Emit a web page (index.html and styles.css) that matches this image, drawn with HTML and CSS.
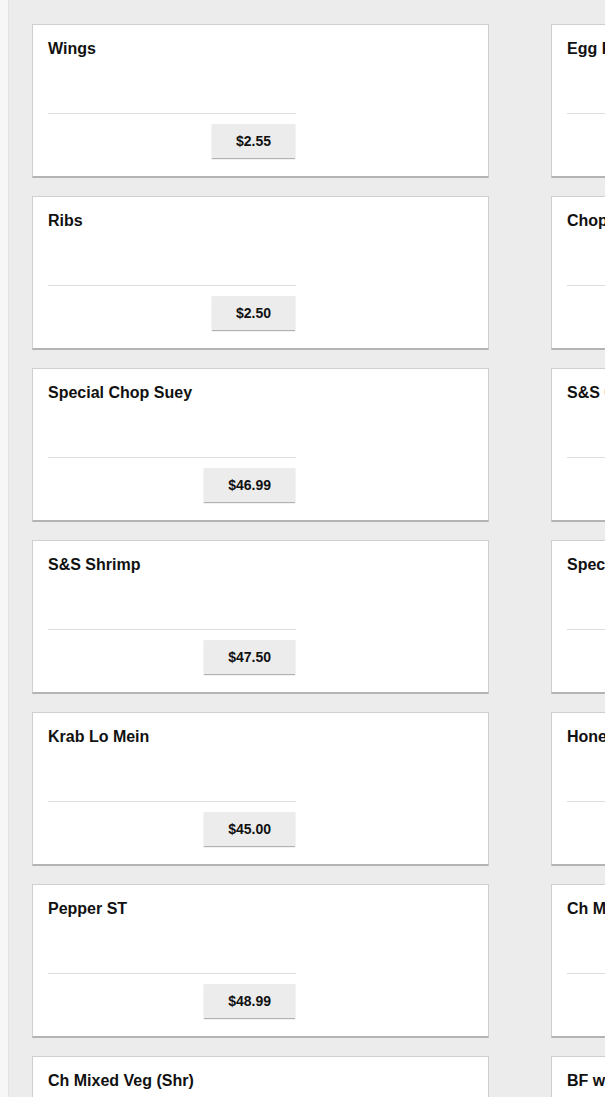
FILE: index.html
```html
<!DOCTYPE html>
<html>
<head>
<meta charset="utf-8">
<link rel="stylesheet" href="styles.css">
</head>
<body>
<div class="page">
  <div class="grid">
    <div class="card"><div class="title">Wings</div><div class="body"><div class="price"><span class="btn">$2.55</span></div></div></div>
    <div class="card"><div class="title">Egg Foo Young</div><div class="body"><div class="price"><span class="btn">$9.95</span></div></div></div>
    <div class="card"><div class="title">Ribs</div><div class="body"><div class="price"><span class="btn">$2.50</span></div></div></div>
    <div class="card"><div class="title">Chop Suey</div><div class="body"><div class="price"><span class="btn">$8.95</span></div></div></div>
    <div class="card"><div class="title">Special Chop Suey</div><div class="body"><div class="price"><span class="btn">$46.99</span></div></div></div>
    <div class="card"><div class="title">S&amp;S Chicken</div><div class="body"><div class="price"><span class="btn">$45.50</span></div></div></div>
    <div class="card"><div class="title">S&amp;S Shrimp</div><div class="body"><div class="price"><span class="btn">$47.50</span></div></div></div>
    <div class="card"><div class="title">Special Lo Mein</div><div class="body"><div class="price"><span class="btn">$46.99</span></div></div></div>
    <div class="card"><div class="title">Krab Lo Mein</div><div class="body"><div class="price"><span class="btn">$45.00</span></div></div></div>
    <div class="card"><div class="title">Honey Chicken</div><div class="body"><div class="price"><span class="btn">$45.00</span></div></div></div>
    <div class="card"><div class="title">Pepper ST</div><div class="body"><div class="price"><span class="btn">$48.99</span></div></div></div>
    <div class="card"><div class="title">Ch Mixed Veg</div><div class="body"><div class="price"><span class="btn">$45.00</span></div></div></div>
    <div class="card"><div class="title">Ch Mixed Veg (Shr)</div><div class="body"><div class="price"><span class="btn">$47.00</span></div></div></div>
    <div class="card"><div class="title">BF w/ Broccoli</div><div class="body"><div class="price"><span class="btn">$47.00</span></div></div></div>
  </div>
</div>
</body>
</html>
```
FILE: styles.css
```css
html, body {
  margin: 0;
  padding: 0;
}
body {
  background: #f7f7f7;
  padding-left: 8px;
  overflow: hidden;
  font-family: "Liberation Sans", Arial, sans-serif;
  color: #111;
}
.page {
  background: #ececec;
  border-left: 1px solid #e3e3e3;
  padding: 24px 0 0 23px;
  min-height: 1097px;
  box-sizing: border-box;
}
.grid {
  display: grid;
  grid-template-columns: 457px 457px;
  column-gap: 62px;
  row-gap: 18px;
  width: 976px;
}
.card {
  background: #fff;
  border: 1px solid #cfcfcf;
  border-bottom: 2px solid #b4b4b4;
  padding: 15px 16px 18px 15px;
  box-sizing: border-box;
  height: 154px;
}
.title {
  font-size: 16px;
  font-weight: bold;
  line-height: 18px;
  height: 73px;
  white-space: nowrap;
}
.body {
  width: 248px;
  border-top: 1px solid #dedede;
}
.price {
  display: flex;
  justify-content: flex-end;
  padding-top: 10px;
  padding-right: 1px;
}
.btn {
  display: block;
  background: #ececec;
  height: 34px;
  line-height: 34px;
  padding: 0 24px;
  font-size: 14px;
  font-weight: bold;
  box-shadow: 0 1px 1px rgba(0, 0, 0, 0.3);
  box-sizing: border-box;
}
```
